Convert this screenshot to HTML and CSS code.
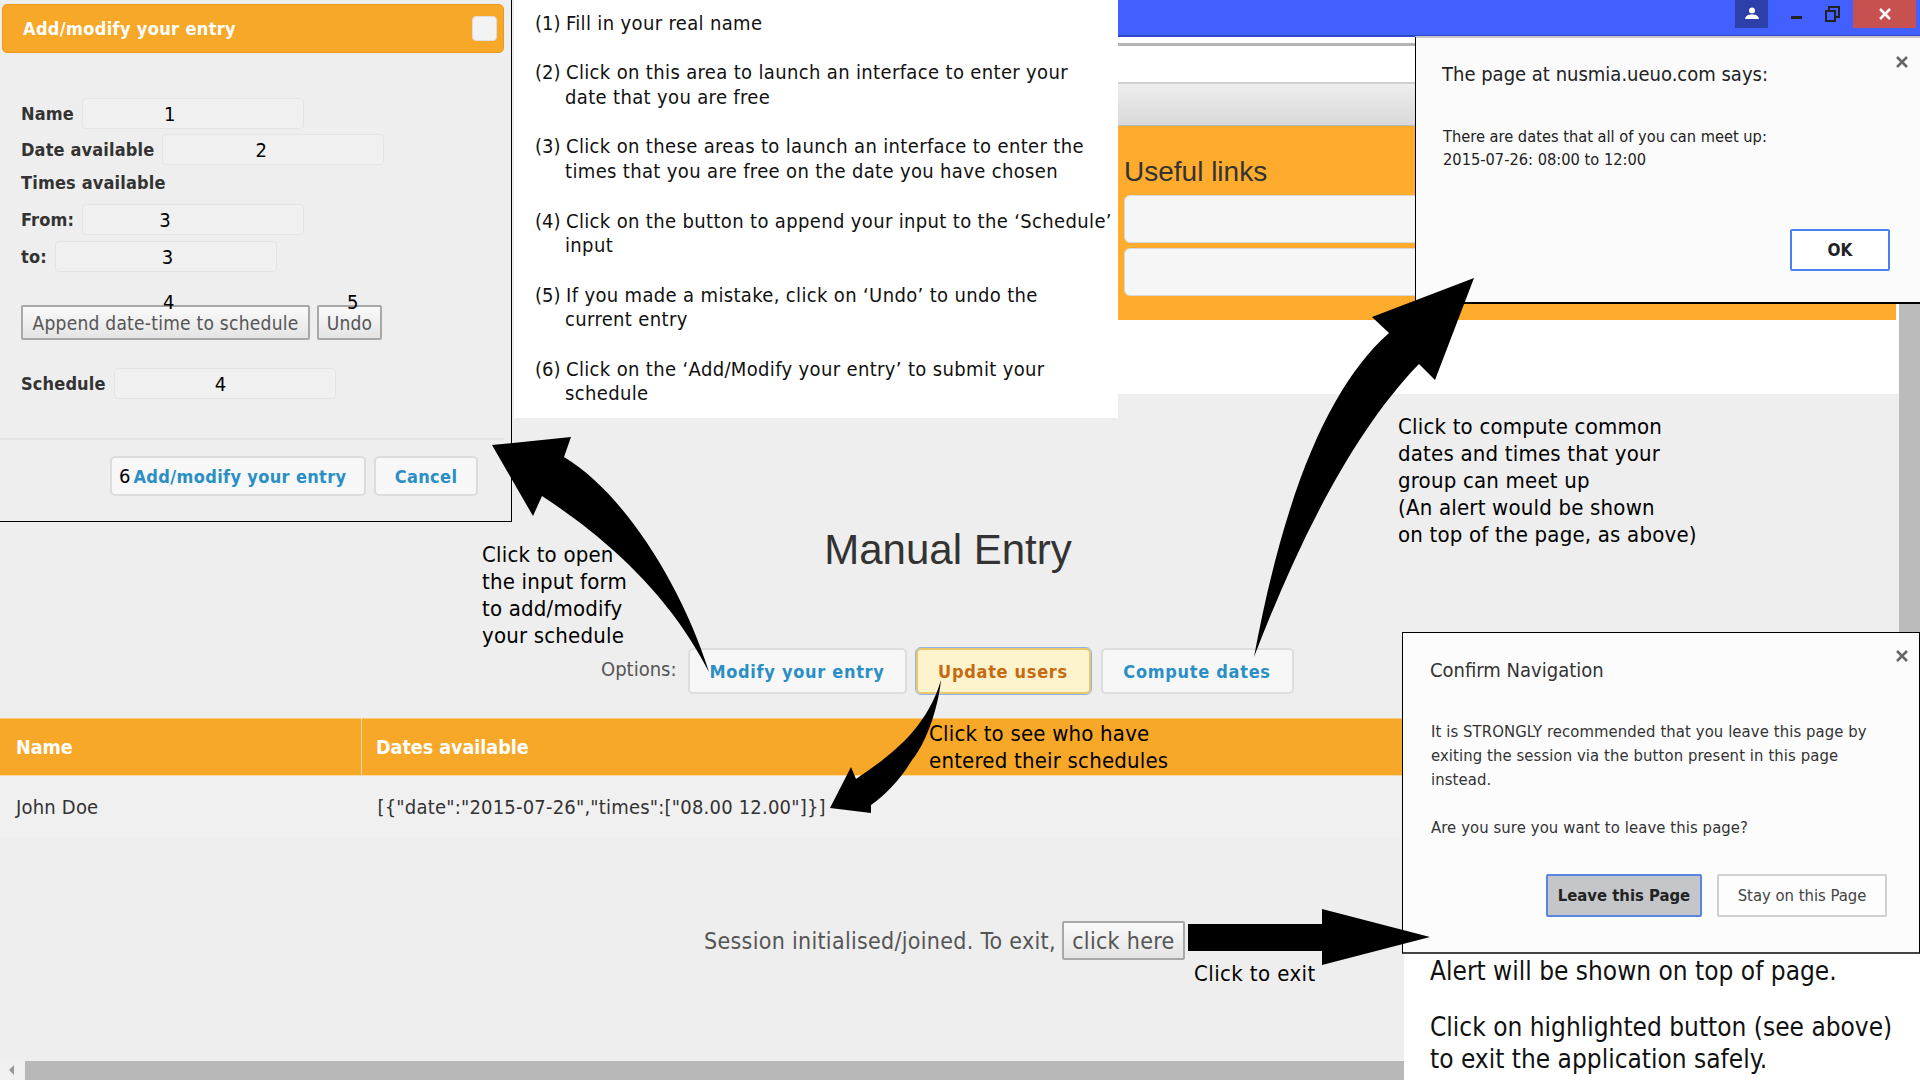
FILE: index.html
```html
<!DOCTYPE html>
<html lang="en">

<head>
    <meta charset="UTF-8">
    <title>Manual Entry</title>
    <link rel="stylesheet" href="styles.css">
</head>

<body>
    <div class="desk">
        <!-- the page underneath -->
        <main class="page">
            <section class="site-top">
                <div class="titlebar">
                    <div class="win-user">
                        <svg width="16" height="16" viewBox="0 0 16 16"><circle cx="8" cy="4.5" r="3" fill="#fff"/><path d="M1 13 C2 9 5 8.500 8 8.500 C11 8.500 14 9 15 13 Z" fill="#fff"/></svg>
                    </div>
                    <div class="win-min"></div>
                    <div class="win-restore">
                        <svg width="15" height="16" viewBox="0 0 15 16" fill="none" stroke="#222" stroke-width="2"><rect x="1" y="5" width="9" height="10"/><path d="M4 5 V1 H14 V11 H10"/></svg>
                    </div>
                    <div class="win-close">
                        <svg width="12" height="12" viewBox="0 0 12 12" stroke="#fff" stroke-width="2.500"><path d="M1 1 L11 11 M11 1 L1 11"/></svg>
                    </div>
                </div>
                <div class="address"></div>
                <div class="toolbar"></div>
                <div class="links">
                    <h2 class="links-title">Useful links</h2>
                    <div class="link-box"></div>
                    <div class="link-box"></div>
                </div>
            </section>

            <h1 class="heading">Manual Entry</h1>

            <div class="options">
                <span class="options-label">Options:</span>
                <button class="btn btn-modify">Modify your entry</button>
                <button class="btn btn-active">Update users</button>
                <button class="btn btn-compute">Compute dates</button>
            </div>

            <table class="users">
                <thead>
                    <tr>
                        <th class="col-name">Name</th>
                        <th>Dates available</th>
                    </tr>
                </thead>
                <tbody>
                    <tr>
                        <td>John Doe</td>
                        <td>[{"date":"2015-07-26","times":["08.00 12.00"]}]</td>
                    </tr>
                </tbody>
            </table>

            <div class="session">
                Session initialised/joined. To exit,
                <button class="btn-plain">click here</button>
            </div>

            <div class="hscroll">
                <svg class="hscroll-arrow" width="6" height="10" viewBox="0 0 6 10"><path d="M5 0 V10 L0 5 Z" fill="#999"/></svg>
                <div class="hscroll-thumb"></div>
            </div>
        </main>

        <div class="vscroll"></div>

        <!-- add/modify dialog -->
        <section class="entry">
            <header class="entry-head">
                <span>Add/modify your entry</span>
                <div class="entry-close"></div>
            </header>
            <form class="entry-form">
                <div class="row row-name"><label>Name</label><div class="field"><span class="num num-1">1</span></div></div>
                <div class="row row-date"><label>Date available</label><div class="field"><span class="num num-2">2</span></div></div>
                <div class="row-title"><label>Times available</label></div>
                <div class="row row-from"><label>From:</label><div class="field"><span class="num num-3a">3</span></div></div>
                <div class="row row-to"><label>to:</label><div class="field"><span class="num num-3b">3</span></div></div>
                <div class="row row-actions">
                    <button type="button" class="btn-plain btn-append">Append date-time to schedule</button>
                    <button type="button" class="btn-plain btn-undo">Undo</button>
                    <span class="mark mark-4">4</span>
                    <span class="mark mark-5">5</span>
                </div>
                <div class="row row-schedule"><label>Schedule</label><div class="field"><span class="num num-4">4</span></div></div>
            </form>
            <footer class="entry-foot">
                <button class="btn btn-submit"><span class="six">6</span>Add/modify your entry</button>
                <button class="btn btn-cancel">Cancel</button>
            </footer>
        </section>

        <!-- steps -->
        <section class="steps">
            <p><span class="step-no">(1)</span>Fill in your real name</p>
            <p><span class="step-no">(2)</span>Click on this area to launch an interface to enter your<br>date that you are free</p>
            <p><span class="step-no">(3)</span>Click on these areas to launch an interface to enter the<br>times that you are free on the date you have chosen</p>
            <p><span class="step-no">(4)</span>Click on the button to append your input to the ‘Schedule’<br>input</p>
            <p><span class="step-no">(5)</span>If you made a mistake, click on ‘Undo’ to undo the<br>current entry</p>
            <p><span class="step-no">(6)</span>Click on the ‘Add/Modify your entry’ to submit your<br>schedule</p>
        </section>

        <!-- alert -->
        <section class="alert">
            <svg class="x" width="12" height="12" viewBox="0 0 12 12" stroke="#666" stroke-width="2.500"><path d="M1 1 L11 11 M11 1 L1 11"/></svg>
            <h3 class="alert-title">The page at nusmia.ueuo.com says:</h3>
            <p class="alert-text">There are dates that all of you can meet up:<br>2015-07-26: 08:00 to 12:00</p>
            <button class="alert-ok">OK</button>
        </section>

        <!-- confirm navigation -->
        <section class="confirm">
            <svg class="x" width="12" height="12" viewBox="0 0 12 12" stroke="#666" stroke-width="2.500"><path d="M1 1 L11 11 M11 1 L1 11"/></svg>
            <h3 class="confirm-title">Confirm Navigation</h3>
            <p class="confirm-text">It is STRONGLY recommended that you leave this page by exiting the session via the button present in this page instead.</p>
            <p class="confirm-text confirm-ask">Are you sure you want to leave this page?</p>
            <div class="confirm-btns">
                <button class="confirm-leave">Leave this Page</button>
                <button class="confirm-stay">Stay on this Page</button>
            </div>
        </section>

        <section class="note">
            <p>Alert will be shown on top of page.</p>
            <p>Click on highlighted button (see above)<br>to exit the application safely.</p>
        </section>

        <svg class="arrows" width="1920" height="1080" viewBox="0 0 1920 1080">
            <path d="M492 445 L571 437 L564 457 C620 490 680 580 709 672 C685 625 640 560 542 496 L533 516 Z" fill="#000"/>
            <path d="M1474 278 L1372 317 L1389 333 C1330 385 1285 490 1254 657 C1295 550 1350 435 1419 364 L1435 380 Z" fill="#000"/>
            <path d="M941 680 C938 710 925 745 912 760 C900 780 885 795 871 805 L871 813 L830 808 L851 767 L856 779 C880 762 925 735 941 680 Z" fill="#000"/>
            <path d="M1188 924 H1322 V909 L1430 937 L1322 965 V951 H1188 Z" fill="#000"/>
        </svg>

        <!-- notes on the picture -->
        <p class="cap cap-open">Click to open<br>the input form<br>to add/modify<br>your schedule</p>
        <p class="cap cap-see">Click to see who have<br>entered their schedules</p>
        <p class="cap cap-compute">Click to compute common<br>dates and times that your<br>group can meet up<br>(An alert would be shown<br>on top of the page, as above)</p>
        <p class="cap cap-exit">Click to exit</p>
    </div>
</body>

</html>
```

FILE: styles.css
```css
html,
body {
    margin: 0;
    padding: 0;
}

.desk {
    position: relative;
    width: 1920px;
    height: 1080px;
    overflow: hidden;
    background-color: #eeeeee;
    font-family: "DejaVu Sans", "Noto Sans", sans-serif;
    font-stretch: condensed;
    color: #333;
}

button {
    font-family: inherit;
    font-stretch: condensed;
    white-space: nowrap;
    cursor: pointer;
}

/* page underneath */
.page {
    display: flex;
    flex-direction: column;
    height: 1080px;
}

.site-top {
    margin-left: 1115px;
    height: 394px;
    background-color: #fff;
}

.titlebar {
    display: flex;
    justify-content: flex-end;
    align-items: flex-start;
    height: 35px;
    background-color: #4160ff;
    border-bottom: 2px solid #2f48c8;
}

.win-user {
    display: flex;
    justify-content: center;
    align-items: center;
    width: 33px;
    height: 28px;
    background-color: #2d3fa8;
}

.win-min {
    width: 11px;
    height: 3px;
    margin: 16px 23px 0 23px;
    background-color: #222;
}

.win-restore {
    height: 16px;
    margin: 6px 13px 0 0;
}

.win-close {
    display: flex;
    justify-content: center;
    align-items: center;
    width: 63px;
    height: 28px;
    margin-right: 4px;
    background-color: #c75050;
}

.address {
    height: 36px;
    border-top: 3px solid #b4b4b4;
    margin-top: 6px;
    border-bottom: 2px solid #cfcfcf;
    background-color: #fff;
}

.toolbar {
    height: 41px;
    background: linear-gradient(#eeeeee, #d9d9d9);
    border-bottom: 1px solid #bbb;
}

.links {
    width: 781px;
    height: 194px;
    padding: 28px 0 0 9px;
    box-sizing: border-box;
    background-color: #ffab2e;
}

.links-title {
    margin: 0 0 5px;
    font-family: "Liberation Sans", sans-serif;
    font-stretch: normal;
    font-size: 28px;
    line-height: 36px;
    font-weight: 400;
    color: #333;
}

.link-box {
    height: 46px;
    margin-bottom: 5px;
    border: 1px solid #d8d8d8;
    border-radius: 6px;
    background-color: #f6f6f6;
}

.heading {
    margin: 130px 24px 0 0;
    text-align: center;
    font-family: "Liberation Sans", sans-serif;
    font-stretch: normal;
    font-size: 42px;
    line-height: 52px;
    font-weight: 400;
    color: #333;
}

.options {
    display: flex;
    align-items: center;
    margin: 72px 0 0 601px;
    font-size: 20px;
    color: #555;
}

.options-label {
    margin: 0 11px 4px 0;
}

.btn {
    height: 46px;
    padding: 0;
    font-size: 18px;
    letter-spacing: 0.7px;
    font-weight: 700;
    color: #2a8fc4;
    background-color: #f7f7f7;
    border: 2px solid #ddd;
    border-radius: 5px;
}

.btn-modify {
    width: 219px;
    margin-right: 9px;
}

.btn-active {
    width: 175px;
    margin-right: 10px;
    color: #c66a10;
    background-color: #fdf3cd;
    border-color: #e8c96a;
    outline: 1px solid #8fb4e8;
}

.btn-compute {
    width: 193px;
}

.users {
    width: 100%;
    margin-top: 24px;
    border-collapse: collapse;
    font-size: 20px;
    letter-spacing: 0.2px;
}

.users th {
    height: 56px;
    padding: 0 0 0 14px;
    text-align: left;
    font-size: 19.500px;
    letter-spacing: 0;
    font-weight: 700;
    color: #fff;
    background-color: #f8a828;
    border-top: 1px solid #fbc878;
    border-bottom: 1px solid #fbd9a0;
}

.users th.col-name {
    width: 345px;
    padding-left: 16px;
    border-right: 1px solid #fcdba8;
}

.users td {
    height: 62px;
    padding: 0 0 0 16px;
    background-color: #f0f0f0;
}

.session {
    display: flex;
    align-items: center;
    justify-content: flex-start;
    gap: 6px;
    margin: 83px 0 0 704px;
    font-size: 23px;
    letter-spacing: 0.3px;
    color: #555;
}

.btn-plain {
    color: #555;
    background: linear-gradient(#fafafa, #e4e4e4);
    border: 2px solid #a8a8a8;
    border-radius: 2px;
}

.session .btn-plain {
    width: 123px;
    height: 39px;
    padding: 0;
    font-size: 23px;
    letter-spacing: 0.3px;
}

.hscroll {
    display: flex;
    align-items: center;
    height: 20px;
    margin-top: auto;
    background-color: #f0f0f0;
}

.hscroll-arrow {
    margin: 0 10px 0 9px;
}

.hscroll-thumb {
    width: 1379px;
    height: 19px;
    background-color: #b8b8b8;
}

.vscroll {
    position: absolute;
    left: 1899px;
    top: 304px;
    width: 21px;
    height: 330px;
    background-color: #bbbbbb;
}

/* dialog */
.entry {
    position: absolute;
    left: 0;
    top: 0;
    width: 511px;
    height: 521px;
    background-color: #eeeeee;
    border-right: 1px solid #000;
    border-bottom: 1px solid #000;
}

.entry-head {
    display: flex;
    justify-content: space-between;
    align-items: center;
    height: 49px;
    margin: 4px 7px 0 2px;
    padding: 0 6px 0 20px;
    box-sizing: border-box;
    font-size: 18px;
    letter-spacing: 0.35px;
    font-weight: 700;
    color: #fff;
    background-color: #f8a828;
    border: 1px solid #ee9a18;
    border-radius: 5px;
}

.entry-close {
    width: 25px;
    height: 25px;
    background-color: #f3f3f3;
    border: 1px solid #ddd;
    border-radius: 4px;
    box-sizing: border-box;
}

.entry-form {
    height: 387px;
    padding: 45px 0 0 21px;
    box-sizing: border-box;
    border-bottom: 2px solid #e4e4e4;
    margin: 0 7px 0 0;
}

.row {
    display: flex;
    align-items: center;
    gap: 8px;
}

.entry-form label {
    font-size: 18px;
    letter-spacing: 0.15px;
    font-weight: 700;
    color: #333;
}

.field {
    position: relative;
    width: 222px;
    height: 31px;
    box-sizing: border-box;
    background-color: #f0f0f0;
    border: 1px solid #e4e4e4;
    border-radius: 4px;
}

.num {
    position: absolute;
    top: 3px;
    font-size: 20px;
    color: #000;
}

.num-1 {
    left: 81px;
}

.num-2 {
    left: 92px;
}

.num-3a {
    left: 76px;
}

.num-3b {
    left: 106px;
}

.num-4 {
    left: 100px;
}

.row-date {
    margin-top: 5px;
}

.row-title {
    height: 25px;
    margin-top: 7px;
}

.row-from {
    margin-top: 7px;
}

.row-to {
    margin-top: 6px;
}

.row-actions {
    position: relative;
    gap: 7px;
    margin-top: 33px;
}

.row-actions .btn-plain {
    height: 35px;
    padding: 0;
    font-size: 19px;
    letter-spacing: 0.25px;
}

.btn-append {
    width: 289px;
}

.btn-undo {
    width: 65px;
}

/* numbers sit across the top edge of the buttons */
.mark {
    position: absolute;
    top: -15px;
    font-size: 20px;
    color: #000;
}

.mark-4 {
    left: 142px;
}

.mark-5 {
    left: 326px;
}

.row-schedule {
    margin-top: 28px;
}

.entry-foot {
    display: flex;
    gap: 8px;
    margin: 16px 0 0 110px;
}

.entry-foot .btn {
    height: 40px;
    letter-spacing: 0.35px;
    border-color: #dcdcdc;
}

.btn-submit {
    width: 256px;
    padding-left: 7px;
    text-align: left;
}

.six {
    margin-right: 3px;
    font-size: 20px;
    font-weight: 400;
    color: #000;
    letter-spacing: 0;
}

.btn-cancel {
    width: 104px;
}

/* numbered steps */
.steps {
    position: absolute;
    left: 514px;
    top: 0;
    width: 604px;
    height: 418px;
    padding: 11px 0 0 21px;
    box-sizing: border-box;
    background-color: #fff;
    font-size: 20px;
    letter-spacing: 0.35px;
    line-height: 24.700px;
    color: #111;
    white-space: nowrap;
}

.steps p {
    margin: 0 0 24.700px;
    padding-left: 30px;
}

.step-no {
    display: inline-block;
    width: 31px;
    margin-left: -30px;
    letter-spacing: 0;
}

/* alert */
.alert {
    position: absolute;
    left: 1415px;
    top: 36px;
    width: 505px;
    height: 268px;
    box-sizing: border-box;
    background-color: #fbfbfb;
    border-left: 1px solid #000;
    border-bottom: 2px solid #000;
    border-top: 2px solid #c8c8c8;
    padding: 0 0 0 26px;
    color: #222;
}

.x {
    position: absolute;
    right: 12px;
    top: 18px;
}

.alert-title {
    margin: 22px 0 0;
    font-size: 20px;
    line-height: 28px;
    font-weight: 400;
}

.alert-text {
    margin: 37px 0 0 1px;
    font-size: 16.300px;
    line-height: 23px;
}

.alert-ok {
    position: absolute;
    right: 30px;
    top: 191px;
    width: 100px;
    height: 42px;
    font-size: 17px;
    font-weight: 700;
    background-color: #fff;
    border: 2px solid #4a80f0;
    border-radius: 2px;
    color: #222;
}

/* confirm */
.confirm {
    position: absolute;
    left: 1402px;
    top: 632px;
    width: 518px;
    height: 322px;
    padding: 0 0 0 27px;
    box-sizing: border-box;
    background-color: #fcfcfc;
    border: 1px solid #000;
    border-bottom: 2px solid #444;
    color: #333;
}

.confirm .x {
    right: 11px;
    top: 17px;
}

.confirm-title {
    margin: 23px 0 0;
    font-size: 20px;
    line-height: 28px;
    font-weight: 400;
}

.confirm-text {
    width: 450px;
    margin: 36px 0 0 1px;
    font-size: 16.500px;
    letter-spacing: 0.1px;
    line-height: 24px;
}

.confirm-ask {
    margin-top: 24px;
}

.confirm-btns {
    position: absolute;
    left: 143px;
    top: 241px;
    display: flex;
    gap: 15px;
}

.confirm-btns button {
    height: 43px;
    font-size: 16.500px;
    border-radius: 2px;
}

.confirm-leave {
    width: 156px;
    font-weight: 700;
    color: #222;
    background-color: #c4c6ca;
    border: 2px solid #5a85dc;
}

.confirm-stay {
    width: 170px;
    color: #444;
    background-color: #fdfdfd;
    border: 2px solid #d0d0d0;
}

.note {
    position: absolute;
    left: 1404px;
    top: 954px;
    width: 516px;
    height: 126px;
    padding: 1px 0 0 26px;
    box-sizing: border-box;
    background-color: #fff;
    font-size: 26px;
    line-height: 32px;
    color: #111;
}

.note p {
    margin: 0 0 24px;
}

/* captions */
.cap {
    position: absolute;
    margin: 0;
    font-size: 22px;
    letter-spacing: 0.2px;
    line-height: 27px;
    color: #000;
    white-space: nowrap;
}

.cap-open {
    left: 482px;
    top: 541px;
}

.cap-see {
    left: 929px;
    top: 720px;
}

.cap-compute {
    left: 1398px;
    top: 413px;
}

.cap-exit {
    left: 1194px;
    top: 960px;
    letter-spacing: 0.4px;
}

.arrows {
    position: absolute;
    left: 0;
    top: 0;
    pointer-events: none;
}
```
